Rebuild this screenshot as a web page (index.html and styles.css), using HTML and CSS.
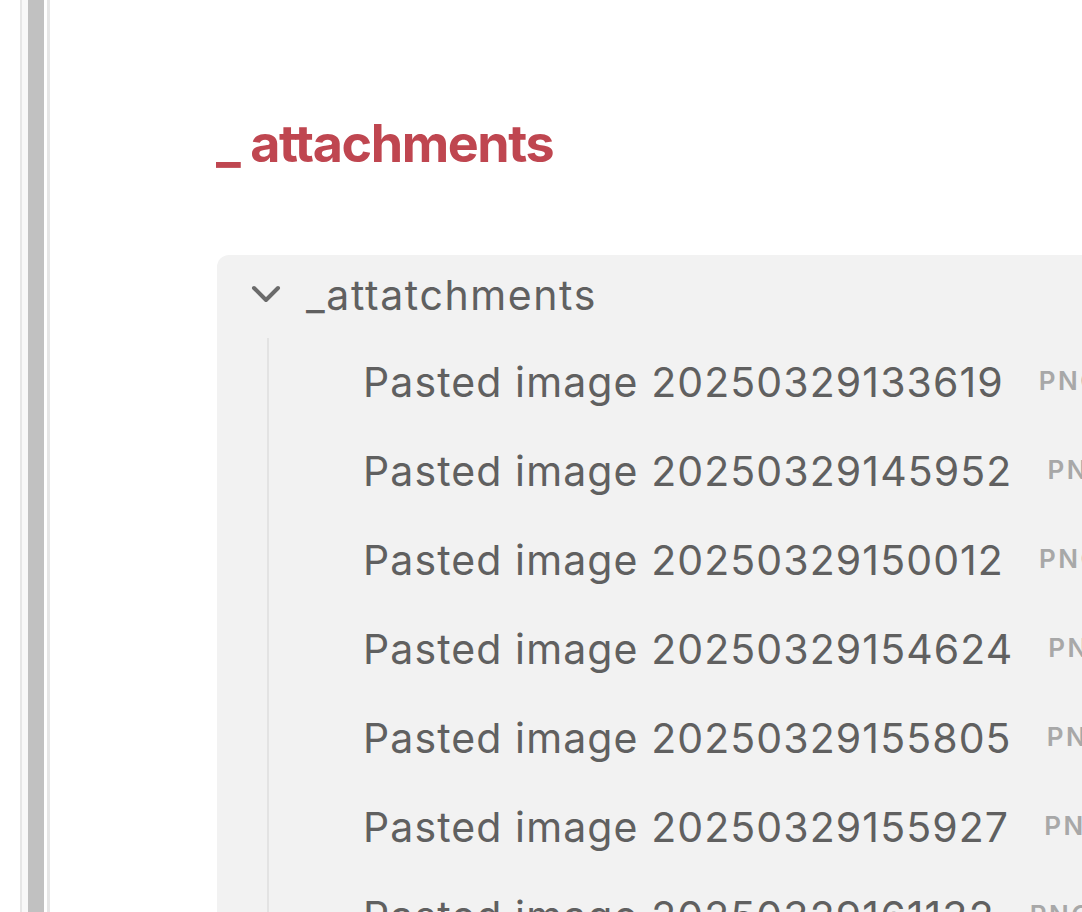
FILE: index.html
```html
<!DOCTYPE html>
<html>
<head>
<meta charset="utf-8">
<link rel="stylesheet" href="styles.css">
</head>
<body>
<div class="app">
  <div class="pane-edge"><div class="track"><div class="thumb"></div></div></div>
  <main class="content">
    <h1 class="title">_ attachments</h1>
    <section class="card">
      <div class="folder-head">
        <svg class="chevron" width="30" height="18" viewBox="0 0 30 18"><path d="M3 3 L15 15 L27 3" fill="none" stroke="#6b6b6b" stroke-width="4" stroke-linecap="round" stroke-linejoin="round"/></svg>
        <span class="folder-name">_attatchments</span>
      </div>
      <ul class="files">
        <li class="file"><span class="file-name">Pasted image 20250329133619</span><span class="ext">PNG</span></li>
        <li class="file"><span class="file-name">Pasted image 20250329145952</span><span class="ext">PNG</span></li>
        <li class="file"><span class="file-name">Pasted image 20250329150012</span><span class="ext">PNG</span></li>
        <li class="file"><span class="file-name">Pasted image 20250329154624</span><span class="ext">PNG</span></li>
        <li class="file"><span class="file-name">Pasted image 20250329155805</span><span class="ext">PNG</span></li>
        <li class="file"><span class="file-name">Pasted image 20250329155927</span><span class="ext">PNG</span></li>
        <li class="file"><span class="file-name">Pasted image 20250329161132</span><span class="ext">PNG</span></li>
      </ul>
    </section>
  </main>
</div>
</body>
</html>
```

FILE: styles.css
```css
html, body {
  margin: 0;
  padding: 0;
  background: #ffffff;
  overflow: hidden;
  height: 100%;
}
.app {
  display: flex;
  height: 912px;
  font-family: Inter, "Noto Sans", sans-serif;
}
.pane-edge {
  margin-left: 20px;
  border-left: 2px solid #e6e6e6;
  border-right: 3px solid #e6e6e6;
  padding-right: 3px;
  background: #ffffff;
  flex: none;
}
.track {
  height: 100%;
  background: #f8f8f8;
  padding-left: 6px;
}
.thumb {
  width: 16px;
  height: 100%;
  background: #c1c1c1;
}
.content {
  flex: 1;
  min-width: 0;
  padding: 112px 0 0 166px;
}
.title {
  margin: 0;
  font-size: 52px;
  line-height: 64px;
  font-weight: 700;
  letter-spacing: -1.4px;
  color: #bf4650;
  white-space: nowrap;
}
.card {
  margin-top: 79px;
  margin-left: 1px;
  width: 1100px;
  background: #f2f2f2;
  border-radius: 12px;
  height: 800px;
}
.folder-head {
  display: flex;
  align-items: center;
  height: 83px;
  padding-left: 34px;
  gap: 25px;
  color: #606060;
  font-size: 41px;
  letter-spacing: 1.6px;
}
.chevron {
  flex: none;
  margin-top: -6px;
}
.folder-name {
  line-height: 80px;
  margin-top: -3px;
  white-space: nowrap;
}
.files {
  list-style: none;
  margin: 2px 0 0 50px;
  padding: 0 0 0 94px;
  border-left: 2px solid #e3e3e3;
}
.file {
  display: flex;
  align-items: center;
  height: 89px;
  line-height: 89px;
  font-size: 41px;
  letter-spacing: 1.1px;
  color: #606060;
  white-space: nowrap;
  margin-top: -2px;
}
.file + .file {
  margin-top: 0;
}
.ext {
  margin-left: 35px;
  margin-top: -4px;
  font-size: 26px;
  line-height: 26px;
  font-weight: 600;
  letter-spacing: 2.5px;
  color: #a8a8a8;
}
```
